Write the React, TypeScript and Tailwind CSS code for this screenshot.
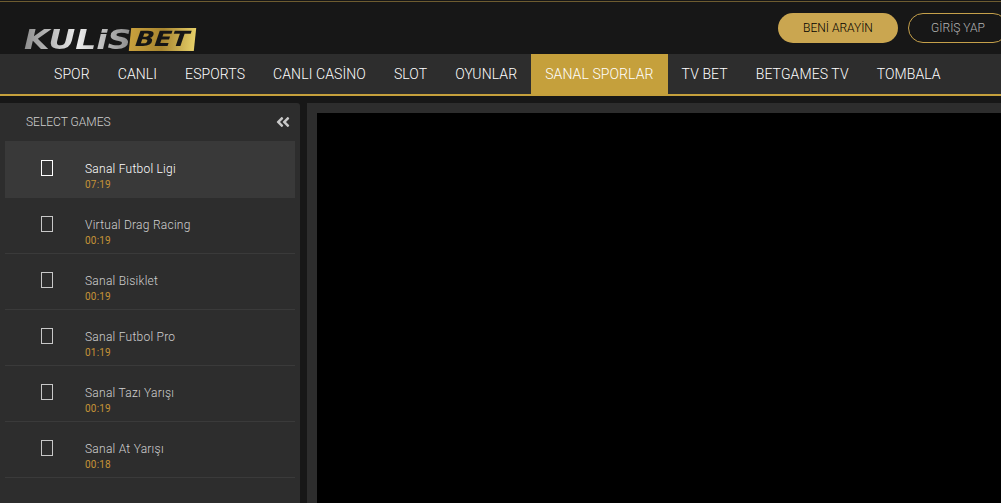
import React from "react";
import { FaAngleDoubleLeft } from "react-icons/fa";

const navItems = [
  "SPOR",
  "CANLI",
  "ESPORTS",
  "CANLI CASİNO",
  "SLOT",
  "OYUNLAR",
  "SANAL SPORLAR",
  "TV BET",
  "BETGAMES TV",
  "TOMBALA",
];

const games = [
  { name: "Sanal Futbol Ligi", time: "07:19", active: true },
  { name: "Virtual Drag Racing", time: "00:19" },
  { name: "Sanal Bisiklet", time: "00:19" },
  { name: "Sanal Futbol Pro", time: "01:19" },
  { name: "Sanal Tazı Yarışı", time: "00:19" },
  { name: "Sanal At Yarışı", time: "00:18" },
];

function Logo() {
  return (
    <div className="flex items-center h-[23px] ml-[24px] mb-[3px] font-['DejaVu_Sans',sans-serif] italic font-bold leading-none">
      <div className="w-[106px]">
        <span className="inline-block origin-left scale-x-[1.27] text-[26px] bg-gradient-to-r from-[#8e8e8e] via-[#ececec] to-[#8a8a8a] bg-clip-text text-transparent">
          KULiS
        </span>
      </div>
      <div className="flex items-center justify-center w-[65px] h-[23px] -skew-x-[6deg] bg-gradient-to-r from-[#c9a03d] via-[#a88630] to-[#e6cf68] text-[#161616]">
        <span className="inline-block scale-x-[1.2] text-[21px]">BET</span>
      </div>
    </div>
  );
}

function GameRow({ name, time, active }: { name: string; time: string; active?: boolean }) {
  return (
    <div
      className={`flex items-center pl-[36px] border-b ${
        active ? "h-[57px] bg-[#393939] border-transparent" : "h-[56px] border-[#3a3a3a]"
      }`}
    >
      <div
        className={`w-[12px] h-[16px] border ${
          active ? "mb-[2px] border-white" : "mb-[4px] border-[#c8c8c8]"
        }`}
      />
      <div className={`ml-[32px] ${active ? "pt-[16px]" : "pt-[14px]"}`}>
        <p className={`text-[12px] font-light leading-[16px] tracking-[0.25px] ${active ? "text-white" : "text-[#d0d0d0]"}`}>
          {name}
        </p>
        <p className="text-[10px] leading-[16px] tracking-[0.2px] text-[#c69337]">{time}</p>
      </div>
    </div>
  );
}

export default function App() {
  return (
    <div className="w-[1001px] h-[503px] overflow-hidden bg-[#171717] font-['Roboto',sans-serif]">
      <div className="border-t border-[#6e5c30] mt-[1px] h-[53px] flex items-end justify-between">
        <Logo />
        <div className="flex gap-[10px] self-start mt-[11px] -mr-[7px]">
          <button className="w-[120px] h-[30px] rounded-full bg-[#caa650] text-black text-[12px] font-light">
            BENİ ARAYİN
          </button>
          <button className="w-[100px] h-[30px] rounded-full border border-[#c5a04a] text-[#b5b5b5] text-[12px] font-light">
            GİRİŞ YAP
          </button>
        </div>
      </div>

      <nav className="flex h-[42px] pl-[40px] bg-[#2d2d2d] border-b-2 border-[#c5a03c]">
        {navItems.map((item) => (
          <a
            key={item}
            className={`flex items-center px-[14px] text-[14px] font-light tracking-[0.1px] text-white whitespace-nowrap ${
              item === "SANAL SPORLAR" ? "bg-[#c5a03c]" : ""
            }`}
          >
            {item}
          </a>
        ))}
      </nav>

      <div className="flex gap-[7px] mt-[7px] h-[400px]">
        <aside className="w-[300px] shrink-0 bg-[#2d2d2d] rounded-tr-[3px] px-[5px]">
          <div className="flex items-center justify-between h-[38px] pl-[21px] pr-[4px]">
            <span className="text-[12px] font-light text-[#d0d0d0]">SELECT GAMES</span>
            <FaAngleDoubleLeft size={16} className="text-[#c8c8c8]" />
          </div>
          {games.map((game) => (
            <GameRow key={game.name} {...game} />
          ))}
        </aside>
        <main className="flex-1 bg-[#2d2d2d] pt-[10px] pl-[10px]">
          <div className="h-full bg-black" />
        </main>
      </div>
    </div>
  );
}
